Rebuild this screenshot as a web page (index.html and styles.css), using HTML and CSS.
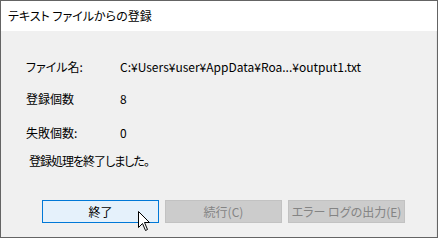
FILE: index.html
```html
<!DOCTYPE html>
<html lang="ja">
<head>
<meta charset="utf-8">
<link rel="stylesheet" href="styles.css">
</head>
<body>
<div class="window">
  <div class="titlebar">テキスト ファイルからの登録</div>
  <div class="content">
    <div class="rows">
      <div class="row r1"><span class="label">ファイル名:</span><span class="value">C:¥Users¥user¥AppData¥Roa...¥output1.txt</span></div>
      <div class="row r2"><span class="label">登録個数</span><span class="value">8</span></div>
      <div class="row r3"><span class="label">失敗個数:</span><span class="value">0</span></div>
      <div class="row msg">登録処理を終了しました。</div>
    </div>
    <div class="buttons">
      <button class="btn primary">終了</button>
      <button class="btn disabled">続行(C)</button>
      <button class="btn disabled">エラー ログの出力(E)</button>
    </div>
  </div>
  <svg class="cursor" width="13" height="21" viewBox="0 0 13 21">
    <path d="M0.5 0.5 L0.5 16.5 L4.5 12.5 L7.5 19.5 L9.5 18.5 L6.5 11.5 L11.5 11.5 Z" fill="#fff" stroke="#000" stroke-width="1" stroke-linejoin="miter"/>
  </svg>
</div>
</body>
</html>
```
FILE: styles.css
```css
html, body {
  margin: 0;
  padding: 0;
  background: #ffffff;
}
body {
  font-family: "Noto Sans CJK JP", "Noto Sans", sans-serif;
  font-size: 12px;
  color: #000;
  font-feature-settings: "palt";
}
.window {
  position: relative;
  width: 436px;
  height: 236px;
  border: 1px solid #646464;
  display: flex;
  flex-direction: column;
  background: #f0f0f0;
}
.titlebar {
  height: 30px;
  background: #ffffff;
  line-height: 30px;
  padding-left: 7px;
  font-size: 12px;
}
.content {
  flex: 1;
  display: flex;
  flex-direction: column;
  border-right: 1px solid #e6e6e6;
}
.rows {
  display: flex;
  flex-direction: column;
  padding-top: 28px;
  padding-left: 25px;
}
.row {
  display: flex;
  height: 16px;
  line-height: 16px;
}
.r2 { margin-top: 16px; }
.r3 { margin-top: 18px; }
.msg {
  margin-top: 12px;
  padding-left: 3px;
  letter-spacing: -1px;
}
.label {
  width: 94px;
}
.buttons {
  display: flex;
  gap: 6px;
  margin-top: 31px;
  padding-left: 41px;
}
.btn {
  width: 117px;
  height: 23px;
  font-family: inherit;
  font-size: 12px;
  font-feature-settings: "palt";
  padding: 0;
  margin: 0;
  line-height: 21px;
}
.primary {
  background: #e5f1fb;
  border: 1px solid #0078d7;
  color: #000;
}
.disabled {
  background: #cccccc;
  border: 1px solid #c2c2c2;
  color: #848484;
}
.cursor {
  position: absolute;
  left: 137px;
  top: 210px;
}
```
